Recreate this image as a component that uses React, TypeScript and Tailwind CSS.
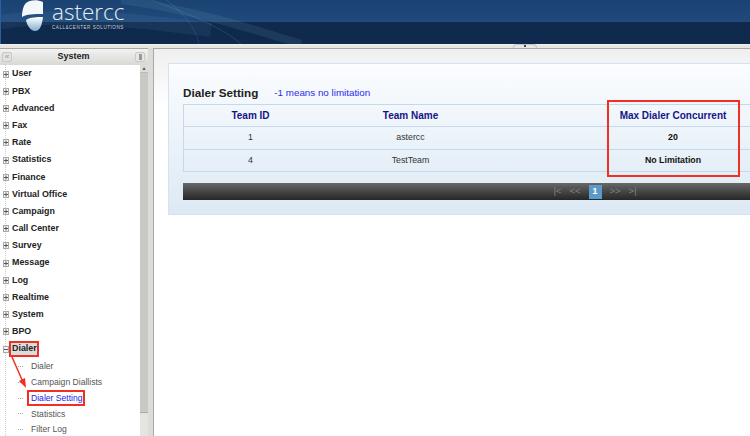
import React from "react";

const menus = ["User", "PBX", "Advanced", "Fax", "Rate", "Statistics", "Finance", "Virtual Office", "Campaign", "Call Center", "Survey", "Message", "Log", "Realtime", "System", "BPO"];
const children = ["Dialer", "Campaign Diallists", "Dialer Setting", "Statistics", "Filter Log"];

function Toggle({ open }: { open?: boolean }) {
  return (
    <svg width="6" height="7" viewBox="0 0 6 7" className="relative shrink-0">
      <rect x="0.5" y="0.5" width="5" height="6" fill="#f4f4f4" stroke="#a8a8a8" />
      <path d={open ? "M1 3.5H5" : "M1 3.5H5M3 1.5V5.5"} stroke="#555" strokeWidth="1" />
    </svg>
  );
}

function Logo() {
  return (
    <svg width="23" height="32" viewBox="0 0 23 32" className="relative shrink-0">
      <defs>
        <linearGradient id="lg" x1="0" y1="0" x2="0" y2="1">
          <stop offset="0" stopColor="#ffffff" />
          <stop offset="1" stopColor="#82aed2" />
        </linearGradient>
      </defs>
      <path d="M22 2C16 -1 8 0 5 3C2 6 1 12 1 17C6 14 12 14 22 14Z" fill="#f4f7fa" />
      <path d="M22 17C16 17 9 17 5 20C6 26 10 31 14 31C19 31 21 25 22 17Z" fill="url(#lg)" />
    </svg>
  );
}

export default function App() {
  return (
    <div className="relative flex h-[436px] w-[750px] flex-col overflow-hidden bg-[#dcdcd8] font-['Liberation_Sans',Arial,sans-serif]">
      {/* Header */}
      <div className="relative flex h-[44px] shrink-0 items-start gap-[8px] border-l border-[#2a5fa8] bg-[linear-gradient(to_bottom,#1a4272_0%,#204a7c_50%,#10294c_50%,#0f2a4e_100%)] pl-[20px]">
        <svg className="absolute left-0 top-0" width="420" height="44" viewBox="0 0 420 44">
          <path d="M120 0C180 8 230 22 300 44" stroke="#7fb4cf" strokeOpacity="0.12" strokeWidth="8" fill="none" />
          <path d="M150 0C190 14 225 30 240 44" stroke="#8fc4dc" strokeOpacity="0.16" strokeWidth="1" fill="none" />
          <path d="M165 0C185 14 195 30 198 44" stroke="#8fc4dc" strokeOpacity="0.14" strokeWidth="1" fill="none" />
          <path d="M0 22C60 14 120 18 210 30" stroke="#6fa4c4" strokeOpacity="0.1" strokeWidth="14" fill="none" />
        </svg>
        <Logo />
        <div className="relative flex flex-col">
          <span className="font-['Open_Sans',sans-serif] text-[22.5px] leading-[24px] font-light text-[#e8eef4]">astercc</span>
          <span className="mt-[1px] text-[4.6px] leading-[6px] tracking-[0.5px] text-[#c5d3df]">CALL&amp;CENTER SOLUTIONS</span>
        </div>
      </div>

      {/* Body */}
      <div className="relative flex min-h-0 flex-1 border-t border-[#f0f0ec] bg-[#e6e6e2] pt-[3px]">
        {/* collapse handle */}
        <div className="absolute left-[513px] top-[-1px] flex h-[4px] w-[24px] items-start justify-center rounded-t-[6px] border border-b-0 border-[#c4c4c0] bg-[#e6e6e6]">
          <div className="h-[2px] w-[2px] bg-[#444]" />
        </div>

        {/* Sidebar */}
        <div className="flex w-[148px] shrink-0 flex-col border-t border-[#a8a8a8] bg-white">
          <div className="flex h-[16px] shrink-0 items-center justify-between bg-gradient-to-b from-[#f2f2f2] to-[#d8d8d4] px-[2px]">
            <div className="flex h-[10px] w-[10px] items-center justify-center rounded-[2px] border border-[#c8c8c8] bg-[#e2e2e2] text-[8px] leading-none text-[#999]">«</div>
            <span className="text-[9px] font-bold text-[#222]">System</span>
            <div className="mr-[1px] flex h-[10px] w-[10px] items-center justify-center rounded-[2px] border border-[#c8c8c8] bg-[#e6e6e6]">
              <div className="h-[6px] w-[3px] bg-[#999]" />
            </div>
          </div>
          <div className="flex min-h-0 flex-1">
            <div className="relative min-w-0 flex-1 overflow-hidden pt-[0.5px]">
              <div className="absolute bottom-0 left-[5px] top-0 border-l border-dotted border-[#ccc]" />
              {menus.map((m) => (
                <div key={m} className="flex h-[17.2px] items-center gap-[3px] pl-[3px]">
                  <Toggle />
                  <span className="text-[8.9px] font-bold text-[#222]">{m}</span>
                </div>
              ))}
              <div className="flex h-[17.2px] items-center gap-[2px] pl-[3px]">
                <Toggle open />
                <span className="relative bg-[#dcdcdc] px-[1px] text-[8.9px] font-bold text-[#222]">Dialer</span>
              </div>
              <div className="pt-[1px]">
                {children.map((c) => (
                  <div key={c} className="flex h-[15.8px] items-center pl-[18px]">
                    <div className="mr-[8px] w-[5px] border-t border-dotted border-[#aaa]" />
                    <span className={`text-[8.6px] ${c === "Dialer Setting" ? "text-[#2222ee]" : "text-[#555]"}`}>{c}</span>
                  </div>
                ))}
              </div>
            </div>
            {/* scrollbar */}
            <div className="flex w-[8px] shrink-0 flex-col bg-[#e4e4e0]">
              <div className="flex h-[8px] items-center justify-center border-b border-[#bbb] bg-[#dcdcd8] text-[5px] leading-none text-[#555]">▲</div>
              <div className="h-[340px] w-[8px] border-b border-[#aaa] bg-[#c8c8c4]" />
            </div>
          </div>
        </div>

        {/* Splitter */}
        <div className="w-[5px] shrink-0 bg-[#dcdcd8]" />

        {/* Main */}
        <div className="min-w-0 flex-1 overflow-hidden border-l border-t border-[#a8a8a8] bg-gradient-to-b from-[#efefef] from-0% to-white to-[15%] pl-[14px] pt-[14px]">
          <div className="h-[152px] w-[900px] border border-[#d4e3f2] bg-gradient-to-b from-[#fbfdff] to-[#dce9f4] pl-[14px] pt-[18px]">
            <div className="flex h-[22px] items-center">
              <span className="text-[11.7px] font-bold text-[#222]">Dialer Setting</span>
              <span className="ml-[16px] text-[9.8px] text-[#2a2aee]">-1 means no limitation</span>
            </div>
            <div className="w-[824px] border border-[#c5d8ec]">
              <div className="grid h-[22px] grid-cols-[133px_187px_338px_1fr] items-center border-b border-[#c5d8ec] text-center text-[10px] font-bold text-[#14148a]">
                <span>Team ID</span>
                <span>Team Name</span>
                <span>Max Dialer Concurrent</span>
                <span />
              </div>
              <div className="grid h-[23px] grid-cols-[133px_187px_338px_1fr] items-center border-b border-[#c5d8ec] text-center text-[8.8px] text-[#333]">
                <span>1</span>
                <span>astercc</span>
                <span className="font-bold text-[#111]">20</span>
                <span />
              </div>
              <div className="grid h-[21px] grid-cols-[133px_187px_338px_1fr] items-center text-center text-[8.8px] text-[#333]">
                <span>4</span>
                <span>TestTeam</span>
                <span className="font-bold text-[#111]">No Limitation</span>
                <span />
              </div>
            </div>
            <div className="mt-[11px] flex h-[17px] w-[824px] items-center justify-center gap-[8px] bg-gradient-to-b from-[#686868] to-[#262626] text-[9.5px] text-[#808080]">
              <span>|&lt;</span>
              <span>&lt;&lt;</span>
              <span className="flex h-[14px] w-[13px] items-center justify-center bg-[#5c9ac8] font-bold text-white">1</span>
              <span>&gt;&gt;</span>
              <span>&gt;|</span>
            </div>
          </div>
        </div>
      </div>

      {/* Annotations */}
      <div className="absolute left-[607px] top-[100px] h-[77px] w-[133px] border-2 border-[#f03020]" />
      <div className="absolute left-[9px] top-[341px] h-[16px] w-[30px] border-2 border-[#f03020]" />
      <div className="absolute left-[27px] top-[390px] h-[16px] w-[58px] border-2 border-[#f03020]" />
      <svg className="absolute left-[8px] top-[355px]" width="22" height="36" viewBox="0 0 22 36">
        <path d="M4 2L15 27" stroke="#f03020" strokeWidth="1.5" fill="none" />
        <path d="M18 33L11 26L17 23Z" fill="#f03020" />
      </svg>
    </div>
  );
}
